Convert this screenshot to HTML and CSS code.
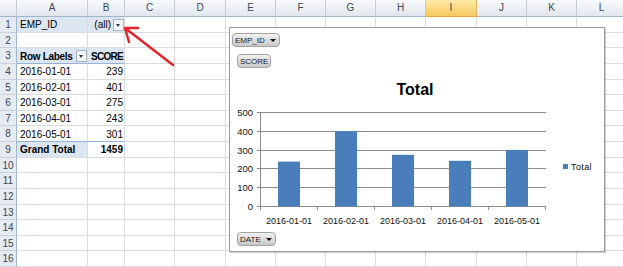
FILE: index.html
```html
<!DOCTYPE html>
<html lang="en">
<head>
  <meta charset="UTF-8">
  <title>Pivot chart</title>
  <link rel="stylesheet" href="styles.css">
</head>
<body>
  <div class="sheet">
    <div class="ch corner"></div><div class="ch">A</div><div class="ch">B</div><div class="ch">C</div><div class="ch">D</div><div class="ch">E</div><div class="ch">F</div><div class="ch">G</div><div class="ch">H</div><div class="ch sel">I</div><div class="ch">J</div><div class="ch">K</div><div class="ch">L</div>

    <div class="rh">1</div><div class="cell pv">EMP_ID</div><div class="cell pv filter">(all)<span class="dd"></span></div><div></div><div></div><div></div><div></div><div></div><div></div><div></div><div></div><div></div><div></div>
    <div class="rh">2</div><div></div><div></div><div></div><div></div><div></div><div></div><div></div><div></div><div></div><div></div><div></div><div></div>
    <div class="rh">3</div><div class="cell pv hd labels">Row Labels<span class="dd"></span></div><div class="cell pv hd score-hd">SCORE</div><div></div><div></div><div></div><div></div><div></div><div></div><div></div><div></div><div></div><div></div>
    <div class="rh">4</div><div class="cell">2016-01-01</div><div class="cell num">239</div><div></div><div></div><div></div><div></div><div></div><div></div><div></div><div></div><div></div><div></div>
    <div class="rh">5</div><div class="cell">2016-02-01</div><div class="cell num">401</div><div></div><div></div><div></div><div></div><div></div><div></div><div></div><div></div><div></div><div></div>
    <div class="rh">6</div><div class="cell">2016-03-01</div><div class="cell num">275</div><div></div><div></div><div></div><div></div><div></div><div></div><div></div><div></div><div></div><div></div>
    <div class="rh">7</div><div class="cell">2016-04-01</div><div class="cell num">243</div><div></div><div></div><div></div><div></div><div></div><div></div><div></div><div></div><div></div><div></div>
    <div class="rh">8</div><div class="cell end">2016-05-01</div><div class="cell num end">301</div><div></div><div></div><div></div><div></div><div></div><div></div><div></div><div></div><div></div><div></div>
    <div class="rh">9</div><div class="cell pv bold">Grand Total</div><div class="cell num bold">1459</div><div></div><div></div><div></div><div></div><div></div><div></div><div></div><div></div><div></div><div></div>
    <div class="rh">10</div><div></div><div></div><div></div><div></div><div></div><div></div><div></div><div></div><div></div><div></div><div></div><div></div>
    <div class="rh">11</div><div></div><div></div><div></div><div></div><div></div><div></div><div></div><div></div><div></div><div></div><div></div><div></div>
    <div class="rh">12</div><div></div><div></div><div></div><div></div><div></div><div></div><div></div><div></div><div></div><div></div><div></div><div></div>
    <div class="rh">13</div><div></div><div></div><div></div><div></div><div></div><div></div><div></div><div></div><div></div><div></div><div></div><div></div>
    <div class="rh">14</div><div></div><div></div><div></div><div></div><div></div><div></div><div></div><div></div><div></div><div></div><div></div><div></div>
    <div class="rh">15</div><div></div><div></div><div></div><div></div><div></div><div></div><div></div><div></div><div></div><div></div><div></div><div></div>
    <div class="rh">16</div><div></div><div></div><div></div><div></div><div></div><div></div><div></div><div></div><div></div><div></div><div></div><div></div>
  </div>

  <!-- pivot chart floating over the sheet -->
  <div class="chart">
    <svg class="plot" viewBox="230 28 374 223" width="374" height="223">
      <text class="title" x="415" y="95" text-anchor="middle" textLength="37" lengthAdjust="spacingAndGlyphs">Total</text>
      <g class="grid">
        <line x1="257" y1="112.5" x2="546" y2="112.5"/>
        <line x1="257" y1="131.5" x2="546" y2="131.5"/>
        <line x1="257" y1="150.5" x2="546" y2="150.5"/>
        <line x1="257" y1="168.5" x2="546" y2="168.5"/>
        <line x1="257" y1="187.5" x2="546" y2="187.5"/>
        <line x1="257" y1="206.5" x2="546" y2="206.5"/>
        <line x1="260.5" y1="112" x2="260.5" y2="210"/>
        <line x1="317.5" y1="206" x2="317.5" y2="210"/>
        <line x1="374.5" y1="206" x2="374.5" y2="210"/>
        <line x1="431.5" y1="206" x2="431.5" y2="210"/>
        <line x1="488.5" y1="206" x2="488.5" y2="210"/>
        <line x1="545.5" y1="206" x2="545.5" y2="210"/>
      </g>
      <g class="bars">
        <rect x="278" y="161.6" width="22" height="44.9"/>
        <rect x="335" y="131.1" width="22" height="75.4"/>
        <rect x="392" y="154.8" width="22" height="51.7"/>
        <rect x="449" y="160.8" width="22" height="45.7"/>
        <rect x="506" y="149.9" width="22" height="56.6"/>
      </g>
      <g class="ylab" text-anchor="end">
        <text x="253" y="116">500</text>
        <text x="253" y="135">400</text>
        <text x="253" y="154">300</text>
        <text x="253" y="172">200</text>
        <text x="253" y="191">100</text>
        <text x="253" y="210">0</text>
      </g>
      <g class="xlab" text-anchor="middle">
        <text x="289" y="223.5">2016-01-01</text>
        <text x="346" y="223.5">2016-02-01</text>
        <text x="403" y="223.5">2016-03-01</text>
        <text x="460" y="223.5">2016-04-01</text>
        <text x="517" y="223.5">2016-05-01</text>
      </g>
      <rect class="swatch" x="563" y="164" width="5" height="5"/>
      <text class="legend" x="571" y="169.5">Total</text>
    </svg>
    <div class="fbtn emp">EMP_ID<span class="tri"></span></div>
    <div class="fbtn score">SCORE</div>
    <div class="fbtn date">DATE<span class="tri"></span></div>
  </div>

  <svg class="arrow" width="623" height="267" viewBox="0 0 623 267">
    <path d="M173 65 L125 28 M125 28 L129 42 M125 28 L138 28"/>
  </svg>
</body>
</html>
```

FILE: styles.css
```css
* {
  margin:0;
  padding:0;
  box-sizing:border-box;
}

body {
  position:relative;
  width:623px;
  height:267px;
  overflow:hidden;
  background:#fff;
  font-family:"Liberation Sans", Arial, sans-serif;
  font-size:10px;
  color:#000;
}

.sheet {
  display:grid;
  grid-template-columns:17px 71px 37px 50px 51px 50px 50px 50px 50px 51px 50px 50px 50px;
  grid-template-rows:17px repeat(16, 15.625px);
}

.sheet > div {
  border-right:1px solid #dadcdd;
  border-bottom:1px solid #dadcdd;
  white-space:nowrap;
  overflow:hidden;
}

.ch {
  background:linear-gradient(#f8fafc, #e1e6ed);
  border-right-color:#c3ccd8 !important;
  border-bottom-color:#9eb6ce !important;
  text-align:center;
  line-height:16px;
  color:#3c4757;
}

.ch.sel {
  background:linear-gradient(#fdeaa6, #f6c961);
  border-right-color:#e2b45a !important;
  border-bottom-color:#e1a53a !important;
}

.rh {
  background:#e6ebf2;
  border-right-color:#9eb6ce !important;
  border-bottom-color:#c9d2de !important;
  text-align:center;
  line-height:15px;
  color:#3c4757;
}

.cell {
  display:flex;
  align-items:center;
  padding:1px 3px 0;
}

.pv {
  background:#dce6f1;
}

.hd {
  font-weight:bold;
  letter-spacing:-0.3px;
  border-bottom-color:#95b3d7 !important;
}

.score-hd {
  justify-content:flex-end;
  padding-right:1px;
  letter-spacing:-0.7px;
}

.end {
  border-bottom-color:#95b3d7 !important;
}

.num {
  justify-content:flex-end;
  padding-right:1px;
}

.bold {
  font-weight:bold;
}

.filter {
  justify-content:flex-end;
  gap:2px;
  padding-right:0;
}

.labels {
  justify-content:space-between;
  padding-right:0;
}

.dd {
  position:relative;
  width:11px;
  height:12px;
  border:1px solid #aab4c0;
  background:#f3f5f8;
  letter-spacing:0;
}

.dd::after {
  content:"";
  position:absolute;
  left:2px;
  top:4px;
  border-left:2.5px solid transparent;
  border-right:2.5px solid transparent;
  border-top:3px solid #333;
}

.chart {
  position:absolute;
  left:229px;
  top:27px;
  width:376px;
  height:225px;
  border:1px solid #9d9d9d;
  background:#fff;
  box-shadow:1px 1px 1px rgba(0, 0, 0, .18);
  display:flex;
  flex-direction:column;
  align-items:flex-start;
  padding:5px 0;
}

.plot {
  position:absolute;
  left:0;
  top:0;
  width:100%;
  height:100%;
  font-family:"Liberation Sans", Arial, sans-serif;
}

.title {
  font-size:16px;
  font-weight:bold;
}

.grid line {
  stroke:#8c8c8c;
  stroke-width:1;
}

.bars rect, .swatch {
  fill:#4a7ebb;
}

.ylab text {
  font-size:9.5px;
  fill:#111;
}

.xlab text {
  font-size:9px;
  fill:#111;
}

.legend {
  font-size:9px;
  letter-spacing:0.4px;
  fill:#111;
}

.fbtn {
  position:relative;
  height:14px;
  border:1px solid #a4a4a4;
  border-radius:4px;
  background:linear-gradient(#f1f1f1, #c8c8c8);
  display:flex;
  align-items:center;
  gap:5px;
  padding:0 3px 0 2px;
  font-size:8px;
  color:#222;
}

.tri {
  width:0;
  height:0;
  border-left:3px solid transparent;
  border-right:3px solid transparent;
  border-top:3px solid #111;
}

.emp {
  margin-left:2px;
}

.score {
  margin-left:7px;
  margin-top:7px;
  padding:0 2px;
}

.date {
  margin-left:7px;
  margin-top:auto;
}

.arrow {
  position:absolute;
  left:0;
  top:0;
  pointer-events:none;
}

.arrow path {
  fill:none;
  stroke:#e5232b;
  stroke-width:2.5;
  stroke-linecap:round;
}
```
